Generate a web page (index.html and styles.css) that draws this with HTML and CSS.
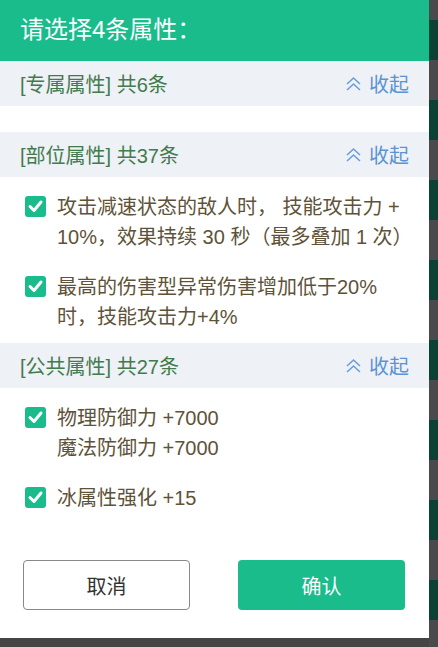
FILE: index.html
```
<!DOCTYPE html>
<html lang="zh-CN">
<head>
    <meta charset="UTF-8">
    <meta name="viewport" content="width=device-width, initial-scale=1.0">
    <title>选择属性</title>
    <link rel="stylesheet" href="styles.css">
</head>
<body>
    <div class="dialog">
        <div class="dialog-title">请选择4条属性：</div>

        <div class="group">
            <div class="group-head">
                <span class="group-name">[专属属性] 共6条</span>
                <span class="fold">
                    <svg width="17" height="15" viewBox="0 0 17 15"><polyline points="2,8 8.5,2 15,8"/><polyline points="2,14 8.5,8 15,14"/></svg>
                    收起
                </span>
            </div>
            <div class="group-body empty"></div>
        </div>

        <div class="group">
            <div class="group-head">
                <span class="group-name">[部位属性] 共37条</span>
                <span class="fold">
                    <svg width="17" height="15" viewBox="0 0 17 15"><polyline points="2,8 8.5,2 15,8"/><polyline points="2,14 8.5,8 15,14"/></svg>
                    收起
                </span>
            </div>
            <div class="group-body">
                <label class="attr">
                    <span class="check"><svg width="21" height="21" viewBox="0 0 21 21"><rect width="21" height="21" rx="3"/><polyline points="5,10.5 9,14.5 16,6"/></svg></span>
                    <span class="attr-text">攻击减速状态的敌人时， 技能攻击力 +<br>10%，效果持续 30 秒（最多叠加 1 次）</span>
                </label>
                <label class="attr">
                    <span class="check"><svg width="21" height="21" viewBox="0 0 21 21"><rect width="21" height="21" rx="3"/><polyline points="5,10.5 9,14.5 16,6"/></svg></span>
                    <span class="attr-text">最高的伤害型异常伤害增加低于20%<br>时，技能攻击力+4%</span>
                </label>
            </div>
        </div>

        <div class="group">
            <div class="group-head">
                <span class="group-name">[公共属性] 共27条</span>
                <span class="fold">
                    <svg width="17" height="15" viewBox="0 0 17 15"><polyline points="2,8 8.5,2 15,8"/><polyline points="2,14 8.5,8 15,14"/></svg>
                    收起
                </span>
            </div>
            <div class="group-body">
                <label class="attr">
                    <span class="check"><svg width="21" height="21" viewBox="0 0 21 21"><rect width="21" height="21" rx="3"/><polyline points="5,10.5 9,14.5 16,6"/></svg></span>
                    <span class="attr-text">物理防御力 +7000<br>魔法防御力 +7000</span>
                </label>
                <label class="attr">
                    <span class="check"><svg width="21" height="21" viewBox="0 0 21 21"><rect width="21" height="21" rx="3"/><polyline points="5,10.5 9,14.5 16,6"/></svg></span>
                    <span class="attr-text">冰属性强化 +15</span>
                </label>
            </div>
        </div>

        <div class="dialog-footer">
            <button class="btn btn-cancel">取消</button>
            <button class="btn btn-ok">确认</button>
        </div>
    </div>
</body>
</html>
```
FILE: styles.css
```
body {
    margin: 0;
    height: 647px;
    font-family: "Liberation Sans", "Noto Sans CJK SC", sans-serif;
    background: repeating-linear-gradient(to bottom, #4a4a4a 0 20px, #0b4233 20px 60px, #4a4a4a 60px 80px);
    overflow: hidden;
}
.dialog {
    width: 429px;
    height: 638px;
    background: white;
    display: flex;
    flex-direction: column;
    box-shadow: 0 9px 0 #444;
}
.dialog-title {
    height: 61px;
    line-height: 60px;
    padding-left: 20px;
    background: #1abc8c;
    color: white;
    font-size: 24px;
}
.group-head {
    height: 45px;
    padding: 0 20px 0 20px;
    background: #eef1f6;
    display: flex;
    align-items: center;
    justify-content: space-between;
    font-size: 20px;
}
.group-name {
    color: #437b4c;
}
.fold {
    color: #5b93d3;
    display: flex;
    align-items: center;
    gap: 7px;
}
.fold svg {
    fill: none;
    stroke: #6b9fd8;
    stroke-width: 1.6;
}
.group-body {
    padding: 15px 0 11px 0;
    display: flex;
    flex-direction: column;
    gap: 20px;
}
.group-body.empty {
    height: 26px;
    padding: 0;
    box-sizing: border-box;
}
.attr {
    display: flex;
    align-items: flex-start;
    padding-left: 25px;
    gap: 11px;
    font-size: 20px;
    line-height: 30px;
    color: #5e5238;
}
.check {
    margin-top: 3px;
    height: 21px;
}
.check rect {
    fill: #1abc8c;
}
.check polyline {
    fill: none;
    stroke: white;
    stroke-width: 3;
    stroke-linecap: round;
    stroke-linejoin: round;
}
.dialog-footer {
    margin-top: auto;
    display: flex;
    justify-content: space-between;
    padding: 0 24px 28px 23px;
}
.btn {
    width: 167px;
    height: 50px;
    border-radius: 4px;
    font-family: inherit;
    font-size: 20px;
    cursor: pointer;
}
.btn-cancel {
    background: white;
    border: 1px solid #888;
    color: #333;
}
.btn-ok {
    background: #1abc8c;
    border: none;
    color: white;
}
```
